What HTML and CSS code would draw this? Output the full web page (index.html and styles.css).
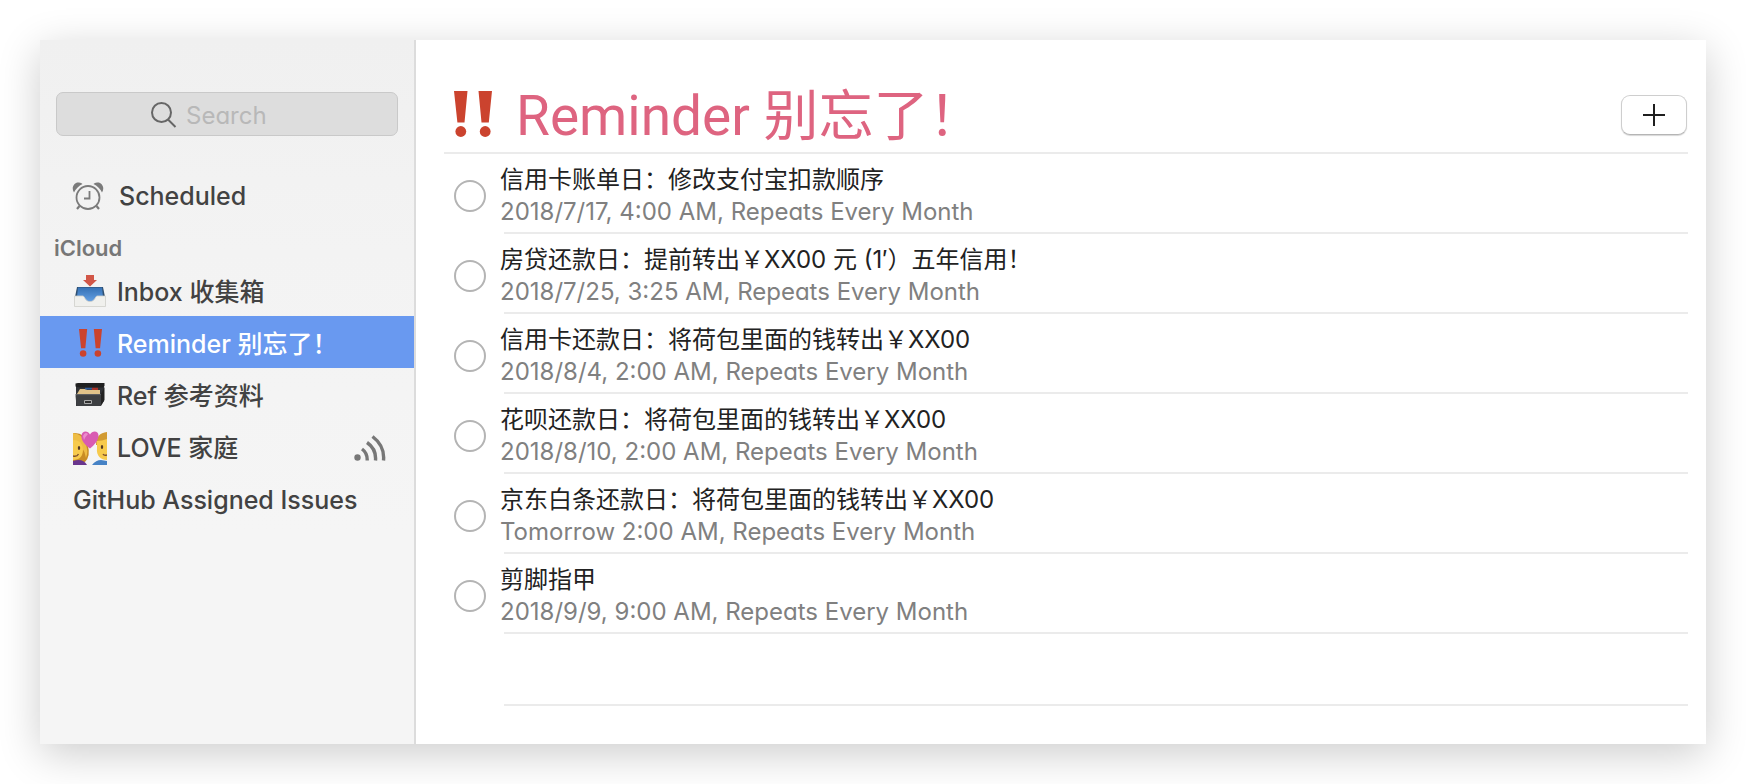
FILE: index.html
```html
<!DOCTYPE html>
<html lang="zh-CN">
<head>
<meta charset="utf-8">
<title>Reminders</title>
<link rel="stylesheet" href="styles.css">
</head>
<body>
<svg class="sprite" aria-hidden="true">
  <symbol id="bangs" viewBox="0 0 38 46">
    <path fill="#cb432e" d="M0 0H13.500L10.500 31.500H3.400ZM24.500 0H38L34.800 31.500H27.500Z"/>
    <circle fill="#cb432e" cx="6.800" cy="40.500" r="5.400"/><circle fill="#cb432e" cx="31.200" cy="40.500" r="5.400"/>
  </symbol>
</svg>
<div class="window">
  <aside class="sidebar">
    <label class="search">
      <svg class="search-icon" viewBox="0 0 26 26" fill="none" stroke="#666" stroke-width="2"><circle cx="10.500" cy="10.500" r="9.500"/><path d="M17 17.500l7.500 7.500"/></svg>
      <input class="search-input" type="text" placeholder="Search" aria-label="Search">
    </label>
    <nav>
      <a class="item scheduled" href="#">
        <svg class="clock" viewBox="0 0 32 28"><g fill="none" stroke="#7b7b7b" stroke-width="1.800"><circle cx="16" cy="15.500" r="11.500"/><path d="M17.500 9v7.500H12"/><path d="M7.500 24l-2.500 3M24.500 24l2.500 3" stroke-width="2.200"/></g><path fill="#7b7b7b" d="M2 10.500C-1.500 5 3 -.5 7 .5Q9.500 .8 10.500 2Q5 4.500 2 10.500ZM30 10.500C33.500 5 29 -.5 25 .5Q22.500 .8 21.500 2Q27 4.500 30 10.500Z"/></svg>
        <span>Scheduled</span>
      </a>
      <h2 class="group">iCloud</h2>
      <a class="item" href="#">
        <svg class="emoji" viewBox="0 0 34 34">
          <defs><linearGradient id="tray" x2="0" y2="1"><stop stop-color="#3571b5"/><stop offset="1" stop-color="#68a4e8"/></linearGradient></defs>
          <path fill="#2f4f70" d="M4 12H30L32 22H2Z"/><path fill="url(#tray)" d="M5 12.500H29L30 22L24 28H10L4 22Z"/>
          <path fill="#f0f0ed" stroke="#cfcfca" stroke-width=".8" d="M1.500 21H10C12 21.500 12 26.500 17 26.500S22 21.500 24 21H32.500V31.500H1.500Z"/>
          <path fill="#d25748" d="M13 0H21V5H24L17 11.500L10 5H13Z"/>
        </svg>
        <span>Inbox 收集箱</span>
      </a>
      <a class="item selected" href="#" aria-current="page">
        <svg class="emoji" viewBox="0 0 34 34"><use href="#bangs" x="6" y="2" width="23" height="28"/></svg>
        <span>Reminder 别忘了！</span>
      </a>
      <a class="item" href="#">
        <svg class="emoji" viewBox="0 0 34 34">
          <path fill="#303236" d="M3 7H31V22L27 27H3Z"/>
          <path fill="#e0c28a" d="M4 15L7 10H13L14 11H27V16H4Z"/>
          <path fill="#315d9c" d="M12 8.500H19V10.500H12Z"/><path fill="#a93329" d="M19 8.500H25V11H19Z"/>
          <path fill="#202020" d="M2.500 4.500L5 4H31.500V7L30 8.500H7L2.500 7.500Z"/>
          <path fill="#5b5d60" d="M2.500 15H28V16.500H2.500Z"/><path fill="#3d3f42" d="M2.500 16.500H28V27H3.500Z"/>
          <path fill="#222" d="M28 15L31.500 8V21L28 27Z"/><path fill="#303030" stroke="#aaa" d="M11.500 21.500H18.500V24.500H11.500Z"/>
        </svg>
        <span>Ref 参考资料</span>
      </a>
      <a class="item" href="#">
        <svg class="emoji" viewBox="0 0 34 34">
          <path fill="#c98d25" d="M0 2Q12 1 14.500 13Q18 25 12 31H0Z"/><path fill="#eebd45" d="M0 2Q9 3 12 11Q16 20 13 27Q11 14 0 10Z"/>
          <path fill="#f7ca4c" d="M0 9Q9 9 10 18Q10 29 0 29Z"/>
          <path fill="#d29b32" d="M34 1Q23 2 23 14H34Z"/><path fill="#f7ca4c" d="M34 8Q29 10 24 10V17C23 25 28 29 34 29Z"/>
          <path fill="#69358d" d="M0 30Q10 27 14 34H0Z"/><path fill="#4682c5" d="M19 34Q23 29 28 29L34 30V34Z"/>
          <ellipse cx="6" cy="17" rx="1.200" ry="1.900" fill="#553a25"/><ellipse cx="29" cy="16" rx="1.200" ry="1.900" fill="#553a25"/>
          <path fill="none" stroke="#80502c" stroke-width="1.400" d="M0 25Q4 26 5.500 23M30 23Q31 25 34 24"/>
          <path fill="#d95bb2" d="M17 17.500C11 13 8 9 8.500 4.500C9 -.5 15 -.5 17 3.500C19 -.5 25.500 -.5 25.500 4.500C25.500 9 22 13.500 17 17.500Z"/><path fill="#ec8dce" d="M10 5Q12 0 15 3Q12 6 11 9Z"/>
        </svg>
        <span>LOVE 家庭</span>
        <svg class="shared" viewBox="0 0 32 26"><circle cx="3.500" cy="22.500" r="3.200" fill="#777"/><g fill="none" stroke="#777" stroke-width="3.400"><path d="M8 14Q13.500 18 13.200 25.500M13 7.500Q22.500 14 21.500 25.500M18.500 1.500Q31 11 29.500 25.500"/></g></svg>
      </a>
      <a class="item" href="#"><span>GitHub Assigned Issues</span></a>
    </nav>
  </aside>
  <main class="main">
    <header class="header">
      <svg class="title-icon" viewBox="0 0 38 46"><use href="#bangs" width="38" height="46"/></svg>
      <h1 class="title">Reminder 别忘了！</h1>
      <button class="add" type="button" aria-label="Add reminder"><svg class="plus" viewBox="0 0 22 22" stroke="#1f1f1f" stroke-width="2"><path d="M11 0V22M0 11H22"/></svg></button>
    </header>
    <ul class="list">
      <li class="row"><input class="check" type="checkbox" id="r1"><label class="text" for="r1"><span class="name">信用卡账单日：修改支付宝扣款顺序</span><span class="due">2018/7/17, 4:00 AM, Repeats Every Month</span></label></li>
      <li class="row"><input class="check" type="checkbox" id="r2"><label class="text" for="r2"><span class="name">房贷还款日：提前转出￥XX00 元 (1′）五年信用！</span><span class="due">2018/7/25, 3:25 AM, Repeats Every Month</span></label></li>
      <li class="row"><input class="check" type="checkbox" id="r3"><label class="text" for="r3"><span class="name">信用卡还款日：将荷包里面的钱转出￥XX00</span><span class="due">2018/8/4, 2:00 AM, Repeats Every Month</span></label></li>
      <li class="row"><input class="check" type="checkbox" id="r4"><label class="text" for="r4"><span class="name">花呗还款日：将荷包里面的钱转出￥XX00</span><span class="due">2018/8/10, 2:00 AM, Repeats Every Month</span></label></li>
      <li class="row"><input class="check" type="checkbox" id="r5"><label class="text" for="r5"><span class="name">京东白条还款日：将荷包里面的钱转出￥XX00</span><span class="due">Tomorrow 2:00 AM, Repeats Every Month</span></label></li>
      <li class="row"><input class="check" type="checkbox" id="r6"><label class="text" for="r6"><span class="name">剪脚指甲</span><span class="due">2018/9/9, 9:00 AM, Repeats Every Month</span></label></li>
      <li class="row empty"><span class="text"></span></li>
    </ul>
  </main>
</div>
</body>
</html>
```
FILE: styles.css
```css
* { box-sizing: border-box; }
body {
  margin: 0;
  padding: 40px;
  background: #fff;
  font-family: Inter, "Noto Sans CJK SC", sans-serif;
  font-feature-settings: "cv11";
  font-size: 24px;
}
.sprite { display: none; }
svg { flex: none; }
.window {
  display: flex;
  background: #fff;
  box-shadow: 0 10px 40px rgba(0, 0, 0, .2);
}
.sidebar {
  flex: none;
  width: 376px;
  padding-top: 52px;
  border-right: 2px solid #dcdcdc;
  background: linear-gradient(#f0f0f0, #f3f3f3 30%, #f5f5f5 70%);
}
.search {
  display: flex;
  align-items: center;
  gap: 9px;
  height: 44px;
  margin: 0 16px 34px;
  padding: 2px 0 0 94px;
  border: 1px solid #c9c9c9;
  border-radius: 7px;
  background: #dddddd;
}
.search-icon { width: 26px; height: 26px; }
.search-input {
  flex: 1;
  min-width: 0;
  padding: 0;
  border: 0;
  outline: 0;
  background: none;
  color: #424242;
  font: inherit;
}
.search-input::placeholder { color: #b8b8b8; opacity: 1; }
.item {
  display: flex;
  align-items: center;
  gap: 10px;
  height: 52px;
  padding: 3px 28px 0 33px;
  color: #424242;
  font-size: 25px;
  font-weight: 500;
  line-height: 36px;
  text-decoration: none;
  white-space: nowrap;
}
.scheduled { gap: 15px; padding: 0 28px 0 32px; }
.clock { width: 32px; height: 28px; }
.emoji { width: 34px; height: 34px; }
.shared { width: 32px; height: 26px; margin-left: auto; }
.selected { background: #6999f0; color: #fff; }
.group {
  margin: 0;
  padding: 15px 14px 5px;
  color: #777;
  font-size: 22px;
  font-weight: 600;
  line-height: 22px;
}
.main { flex: 1; min-width: 0; padding: 36px 18px 38px 28px; }
.header {
  display: flex;
  align-items: center;
  height: 78px;
  padding-left: 10px;
  border-bottom: 2px solid #ebebeb;
}
.title-icon { width: 38px; height: 46px; }
.title {
  flex: 1;
  margin: 0 0 0 24px;
  padding-top: 4px;
  color: #de6480;
  font-family: Roboto, "Noto Sans CJK SC", sans-serif;
  font-size: 55px;
  font-weight: 400;
  line-height: 72px;
  white-space: nowrap;
}
.add {
  display: grid;
  place-items: center;
  width: 66px;
  height: 40px;
  margin: 2px 1px 0 0;
  padding: 0;
  border: 1px solid #cecece;
  border-bottom-color: #b5b5b5;
  border-radius: 9px;
  background: #fff;
  box-shadow: 0 1px 1px rgba(0, 0, 0, .16);
}
.plus { width: 22px; height: 22px; }
.list { margin: 0; padding: 0; list-style: none; }
.row { display: flex; align-items: center; padding-left: 10px; }
.check {
  appearance: none;
  flex: none;
  width: 32px;
  height: 32px;
  margin: 4px 14px 0 0;
  border: 2px solid #b4b4b4;
  border-radius: 50%;
  background: #fff;
}
.check:checked { background: #de6480; }
.text {
  position: relative;
  display: grid;
  flex: 1;
  height: 80px;
  padding: 10px 0 6px;
  line-height: 32px;
}
.text::after {
  content: "";
  position: absolute;
  right: 0;
  bottom: 0;
  left: 4px;
  height: 2px;
  background: #ebebeb;
}
.name { color: #222; }
.due { color: #808080; }
.empty { padding-left: 56px; }
.empty .text { height: 72px; }
```
